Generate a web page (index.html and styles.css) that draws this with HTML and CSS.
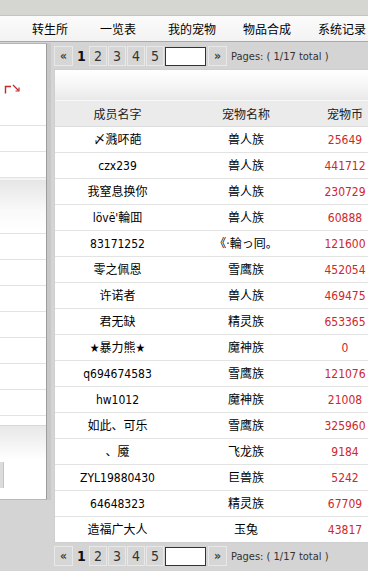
FILE: index.html
```html
<!DOCTYPE html>
<html lang="zh-CN">
<head>
<meta charset="utf-8">
<title>宠物排行</title>
<link rel="stylesheet" href="styles.css">
</head>
<body>
<div class="topband"></div>
<nav class="nav">
  <a class="nav-item wide">转生所</a>
  <a class="nav-item wide">一览表</a>
  <a class="nav-item">我的宠物</a>
  <a class="nav-item">物品合成</a>
  <a class="nav-item">系统记录</a>
</nav>
<div class="main">
  <aside class="side">
    <div class="side-head">
      <svg class="side-icon" width="16" height="10" viewBox="0 0 16 10">
        <path d="M1.5 9.5 V2.5 H7" fill="none" stroke="#c0282a" stroke-width="1.4"/>
        <path d="M9 1 L14.5 6.5" fill="none" stroke="#c0282a" stroke-width="1.2"/>
        <path d="M15 3.5 V7 H11.5" fill="none" stroke="#c0282a" stroke-width="1.2"/>
      </svg>
    </div>
    <div class="side-row"></div>
    <div class="side-row"></div>
    <div class="side-grad"></div>
    <div class="side-row"></div>
    <div class="side-row"></div>
    <div class="side-row"></div>
    <div class="side-row"></div>
    <div class="side-row"></div>
    <div class="side-row"></div>
    <div class="side-row"></div>
    <div class="side-gap"></div>
    <div class="side-grad2"></div>
    <div class="side-foot"><span class="side-btn"></span></div>
  </aside>
  <section class="content">
    <div class="pager">
      <span class="pg-btn pg-arrow">«</span>
      <span class="pg-cur">1</span>
      <span class="pg-btn">2</span>
      <span class="pg-btn">3</span>
      <span class="pg-btn">4</span>
      <span class="pg-btn">5</span>
      <span class="pg-input"></span>
      <span class="pg-btn pg-arrow pg-next">»</span>
      <span class="pg-info">Pages: ( 1/17 total )</span>
    </div>
    <div class="panel">
      <div class="panel-top"></div>
      <table class="list">
        <colgroup><col class="c1"><col class="c2"><col class="c3"></colgroup>
        <thead>
          <tr><th>成员名字</th><th>宠物名称</th><th>宠物币</th></tr>
        </thead>
        <tbody>
          <tr><td>〆溅吥葩</td><td>兽人族</td><td class="num">25649</td></tr>
          <tr><td>czx239</td><td>兽人族</td><td class="num">441712</td></tr>
          <tr><td>我窒息换你</td><td>兽人族</td><td class="num">230729</td></tr>
          <tr><td>lövё'輪囬</td><td>兽人族</td><td class="num">60888</td></tr>
          <tr><td>83171252</td><td>《·輪っ囘。</td><td class="num">121600</td></tr>
          <tr><td>零之佩恩</td><td>雪鹰族</td><td class="num">452054</td></tr>
          <tr><td>许诺者</td><td>兽人族</td><td class="num">469475</td></tr>
          <tr><td>君无缺</td><td>精灵族</td><td class="num">653365</td></tr>
          <tr><td>★暴力熊★</td><td>魔神族</td><td class="num">0</td></tr>
          <tr><td>q694674583</td><td>雪鹰族</td><td class="num">121076</td></tr>
          <tr><td>hw1012</td><td>魔神族</td><td class="num">21008</td></tr>
          <tr><td>如此、可乐</td><td>雪鹰族</td><td class="num">325960</td></tr>
          <tr><td>、魇</td><td>飞龙族</td><td class="num">9184</td></tr>
          <tr><td>ZYL19880430</td><td>巨兽族</td><td class="num">5242</td></tr>
          <tr><td>64648323</td><td>精灵族</td><td class="num">67709</td></tr>
          <tr><td>造福广大人</td><td>玉兔</td><td class="num">43817</td></tr>
        </tbody>
      </table>
    </div>
    <div class="pager">
      <span class="pg-btn pg-arrow">«</span>
      <span class="pg-cur">1</span>
      <span class="pg-btn">2</span>
      <span class="pg-btn">3</span>
      <span class="pg-btn">4</span>
      <span class="pg-btn">5</span>
      <span class="pg-input"></span>
      <span class="pg-btn pg-arrow pg-next">»</span>
      <span class="pg-info">Pages: ( 1/17 total )</span>
    </div>
  </section>
</div>
</body>
</html>
```

FILE: styles.css
```css
html, body {
  margin: 0;
  padding: 0;
  overflow: hidden;
}
body {
  background: #d4d4d4;
  font-family: "DejaVu Sans Condensed", "DejaVu Sans", "Noto Sans CJK SC", sans-serif;
  font-size: 12px;
  color: #000;
  width: 368px;
  height: 571px;
}
.topband {
  height: 15px;
  background: #d5d5d1;
  border-bottom: 1px solid #c4c4c0;
}
.nav {
  height: 25px;
  display: flex;
  align-items: center;
  gap: 27px;
  padding-left: 32px;
  background: linear-gradient(#fbfbfb, #f3f3f3);
  border-bottom: 1px solid #a9a9a9;
  white-space: nowrap;
  overflow: hidden;
  font-family: "Noto Sans CJK SC", sans-serif;
}
.nav-item {
  color: #000;
  flex: none;
  line-height: 1;
}
.nav-item.wide { margin-right: 5px; }
.main {
  display: flex;
  align-items: flex-start;
  gap: 7px;
  margin-top: 1px;
  width: 378px;
}
.side {
  width: 46px;
  flex: none;
  background: #fff;
  border-top: 1px solid #b4b4b4;
  border-right: 1px solid #9c9c9c;
  border-bottom: 1px solid #b8b8b8;
  box-shadow: 4px 0 0 #c8c8c8;
}
.side-head {
  height: 82px;
  border-bottom: 1px solid #e2e2e2;
  padding-left: 4px;
  box-sizing: border-box;
  padding-top: 40px;
}
.side-icon { display: block; }
.side-row {
  height: 25px;
  border-bottom: 1px solid #e2e2e2;
}
.side-grad {
  height: 56px;
  border-top: 2px solid #f4f4f4;
  box-sizing: border-box;
  background: linear-gradient(#e6e6e6, #fafafa 60%, #fff);
  border-bottom: 1px solid #e2e2e2;
}
.side-gap {
  height: 9px;
  border-bottom: 1px solid #d8d8d8;
}
.side-grad2 {
  height: 34px;
  background: linear-gradient(#e8e8e8, #f8f8f8 70%, #fff);
}
.side-foot {
  height: 39px;
  padding-top: 2px;
  box-sizing: border-box;
}
.side-btn {
  display: block;
  width: 3px;
  height: 26px;
  background: #dcdcdc;
  border-right: 1px solid #c4c4c4;
}
.content {
  width: 324px;
  flex: none;
}
.pager {
  display: flex;
  align-items: center;
  height: 20px;
  margin-top: 3px;
  gap: 1px;
  font-family: "DejaVu Sans Condensed", "DejaVu Sans", sans-serif;
}
.pg-btn {
  width: 16px;
  height: 18px;
  border: 1px solid #e8e8e8;
  background: #d6d6d6;
  display: flex;
  align-items: center;
  justify-content: center;
  font-size: 14px;
  color: #333;
  line-height: 1;
}
.pg-arrow {
  width: 17px;
  font-size: 12px;
  font-weight: bold;
  color: #444;
}
.pg-cur {
  width: 13px;
  margin-left: 1px;
  text-align: center;
  font-size: 14px;
  font-weight: bold;
  color: #111;
}
.pg-input {
  width: 39px;
  height: 17px;
  background: #fff;
  border: 1px solid #333;
}
.pg-next { margin-left: 1px; }
.pg-info {
  margin-left: 3px;
  font-size: 11px;
  color: #333;
}
.panel {
  margin-top: 3px;
  background: #fff;
  border: 1px solid #cfcfcf;
  border-right: none;
}
.panel-top {
  height: 30px;
  background: linear-gradient(#ffffff, #f6f6f6 50%, #e9e9e9);
}
.list {
  border-collapse: collapse;
  table-layout: fixed;
  width: 323px;
}
.c1 { width: 125px; }
.c2 { width: 132px; }
.c3 { width: 66px; }
.list th {
  height: 25px;
  padding: 0;
  font-weight: normal;
  background: #ebebeb;
  border-top: 1px solid #f8f8f8;
  border-bottom: 1px solid #dedede;
  color: #222;
  font-family: "Noto Sans CJK SC", sans-serif;
  line-height: 1;
}
.list td {
  height: 25px;
  padding: 0;
  text-align: center;
  border-bottom: 1px solid #e3e3e3;
  white-space: nowrap;
  line-height: 1;
}
.list tbody tr:last-child td { border-bottom: none; }
.list td.num {
  color: #d0262a;
}
```
